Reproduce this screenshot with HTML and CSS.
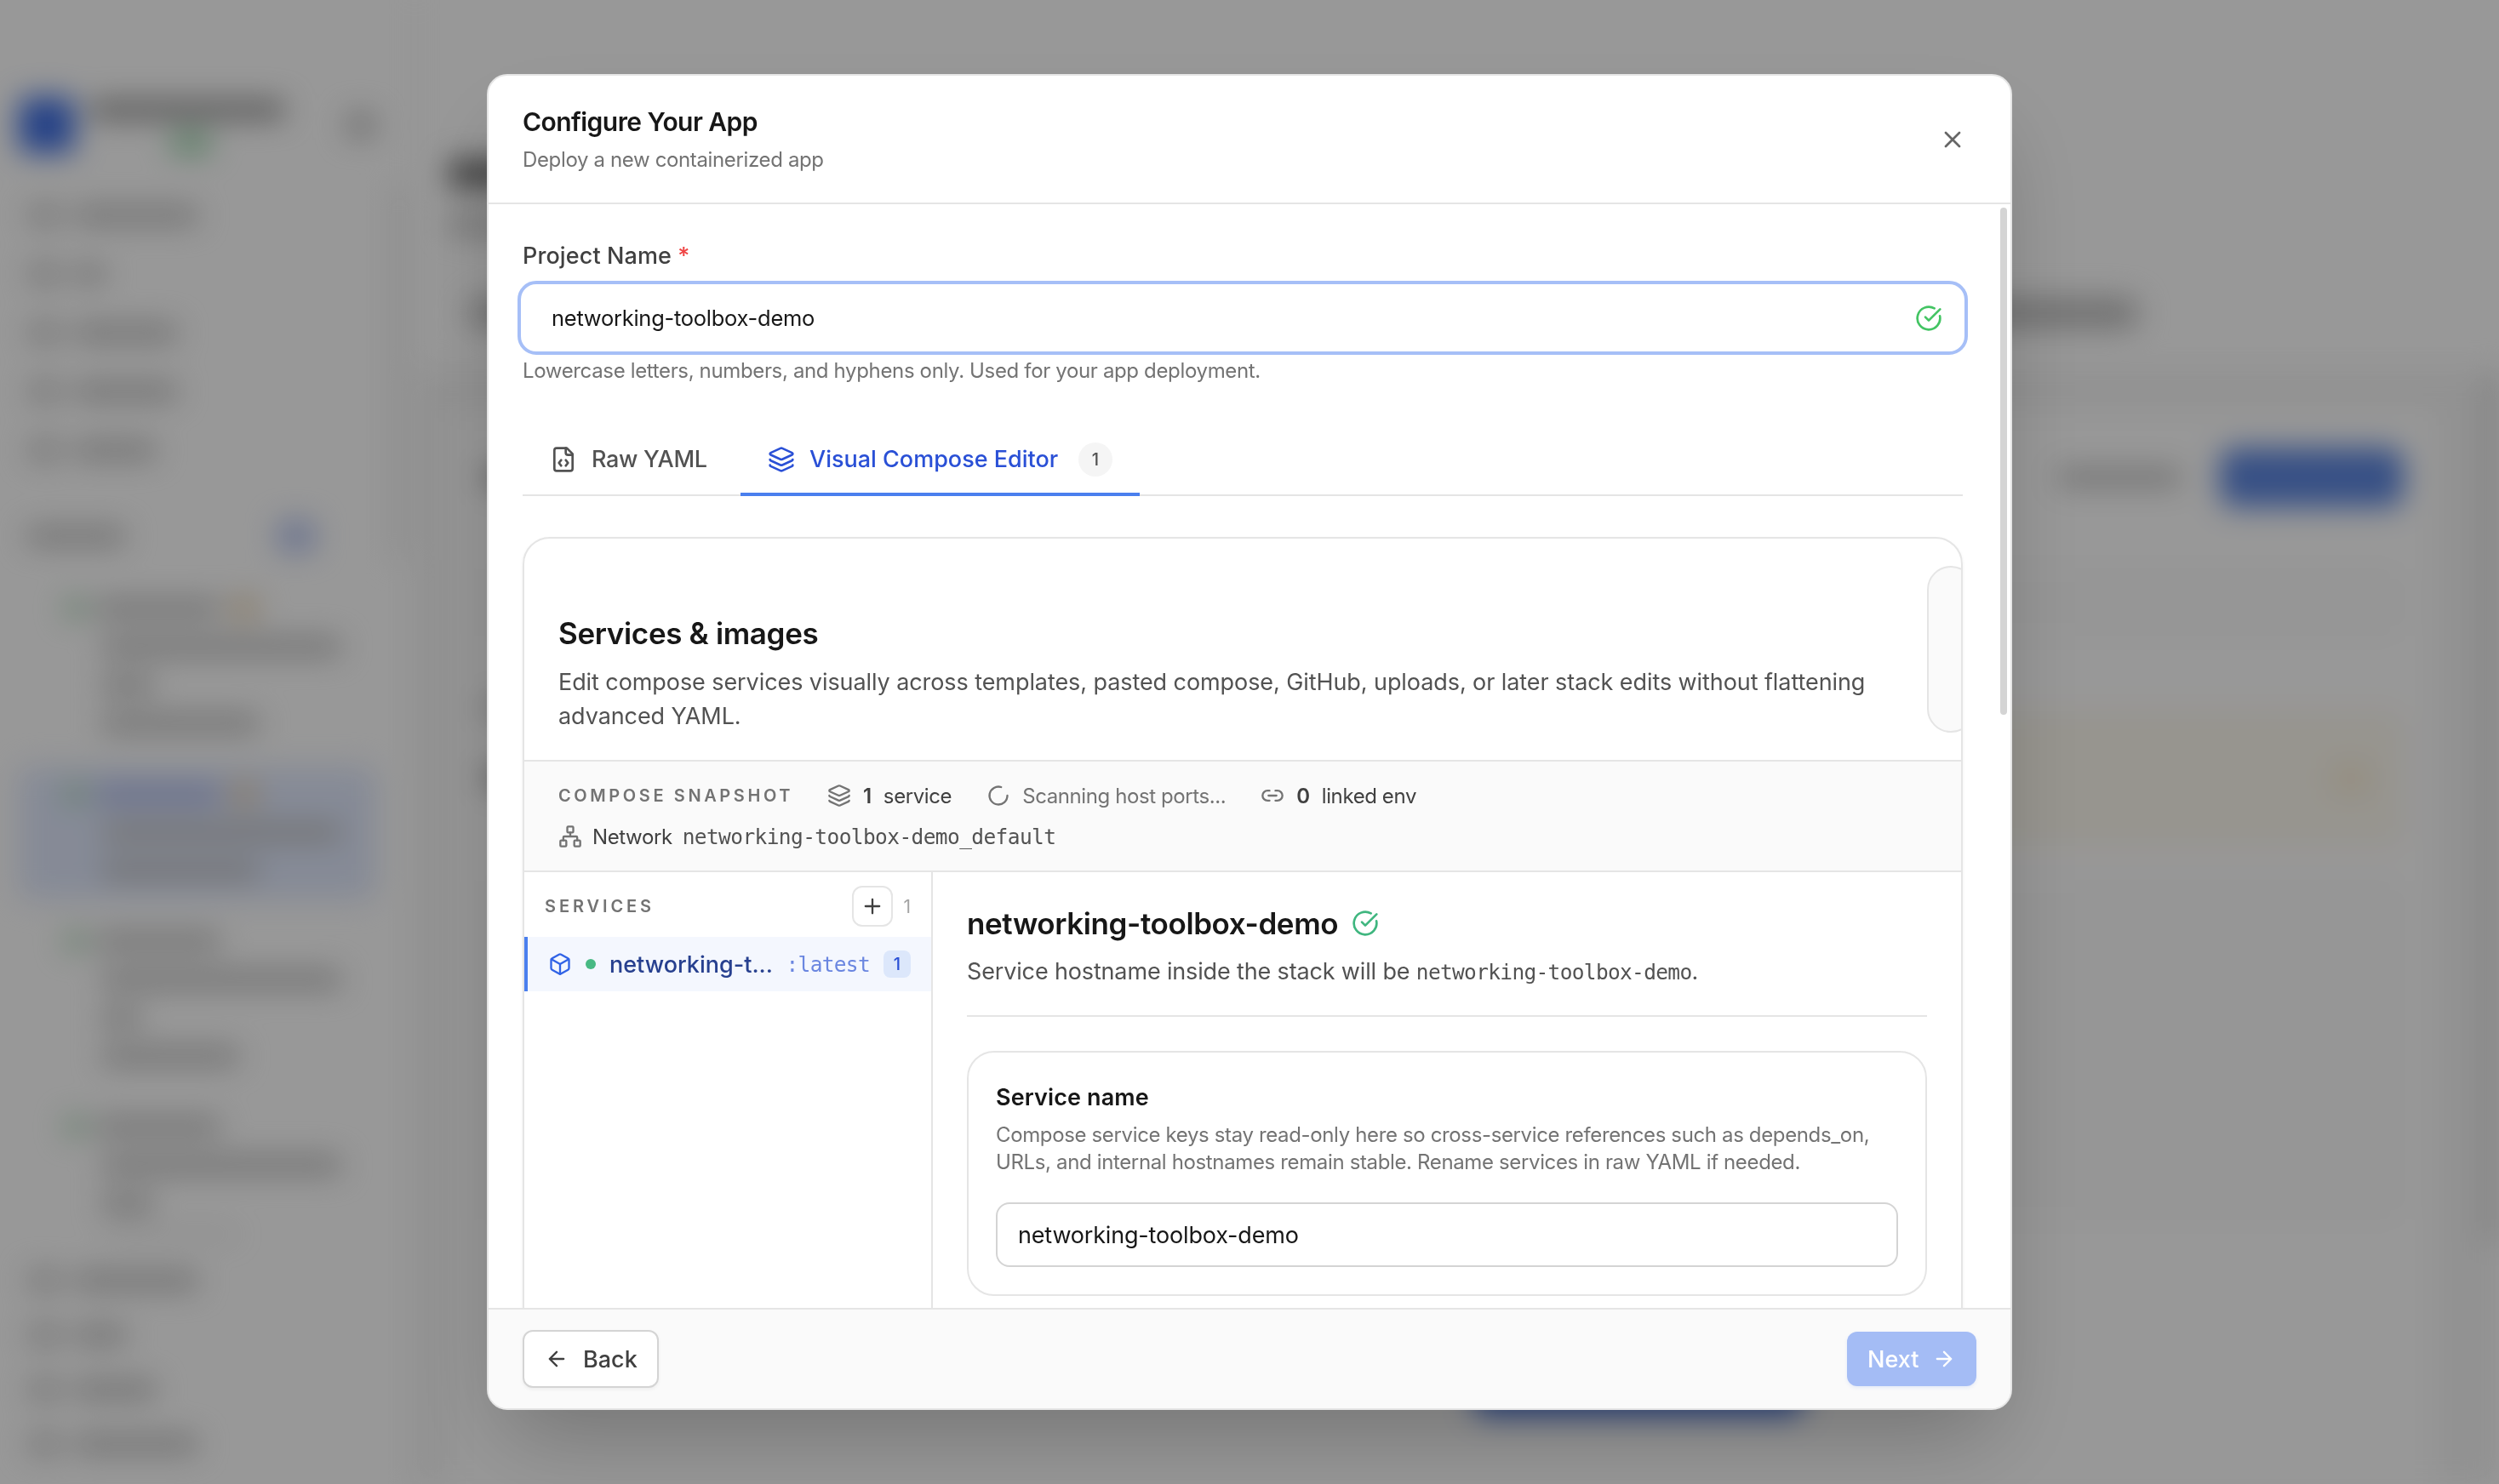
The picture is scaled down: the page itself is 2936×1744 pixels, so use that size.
FILE: index.html
```html
<!DOCTYPE html>
<html lang="en">
<head>
    <meta charset="UTF-8">
    <meta name="viewport" content="width=device-width, initial-scale=1.0">
    <title>Configure Your App</title>
    <link rel="stylesheet" href="styles.css">
</head>
<body>
    <!-- icon set -->
    <svg class="sprite">
        <symbol id="i-x" viewBox="0 0 24 24"><path d="M18 6 6 18M6 6l12 12"/></symbol>
        <symbol id="i-check" viewBox="0 0 24 24"><path d="M21.801 10A10 10 0 1 1 17 3.335"/><path d="m9 11 3 3L22 4"/></symbol>
        <symbol id="i-file" viewBox="0 0 24 24"><path d="M15 2H6a2 2 0 0 0-2 2v16a2 2 0 0 0 2 2h12a2 2 0 0 0 2-2V7Z"/><path d="M14 2v4a2 2 0 0 0 2 2h4"/><path d="M10 12.5 8 15l2 2.5M14 12.5l2 2.5-2 2.5"/></symbol>
        <symbol id="i-layers" viewBox="0 0 24 24"><path d="M12.83 2.18a2 2 0 0 0-1.66 0L2.6 6.08a1 1 0 0 0 0 1.83l8.58 3.91a2 2 0 0 0 1.66 0l8.58-3.9a1 1 0 0 0 0-1.83z"/><path d="M2 12a1 1 0 0 0 .58.91l8.6 3.91a2 2 0 0 0 1.65 0l8.58-3.9A1 1 0 0 0 22 12"/><path d="M2 17a1 1 0 0 0 .58.91l8.6 3.91a2 2 0 0 0 1.65 0l8.58-3.9A1 1 0 0 0 22 17"/></symbol>
        <symbol id="i-loader" viewBox="0 0 24 24"><path d="M21 12a9 9 0 1 1-6.219-8.56"/></symbol>
        <symbol id="i-link" viewBox="0 0 24 24"><path d="M9 17H7A5 5 0 0 1 7 7h2M15 7h2a5 5 0 1 1 0 10h-2M8 12h8"/></symbol>
        <symbol id="i-network" viewBox="0 0 24 24"><rect x="16" y="16" width="6" height="6" rx="1"/><rect x="2" y="16" width="6" height="6" rx="1"/><rect x="9" y="2" width="6" height="6" rx="1"/><path d="M5 16v-3a1 1 0 0 1 1-1h12a1 1 0 0 1 1 1v3M12 12V8"/></symbol>
        <symbol id="i-plus" viewBox="0 0 24 24"><path d="M5 12h14M12 5v14"/></symbol>
        <symbol id="i-box" viewBox="0 0 24 24"><path d="M21 8a2 2 0 0 0-1-1.73l-7-4a2 2 0 0 0-2 0l-7 4A2 2 0 0 0 3 8v8a2 2 0 0 0 1 1.73l7 4a2 2 0 0 0 2 0l7-4A2 2 0 0 0 21 16Z"/><path d="m3.3 7 8.7 5 8.7-5M12 22V12"/></symbol>
        <symbol id="i-left" viewBox="0 0 24 24"><path d="m12 19-7-7 7-7M19 12H5"/></symbol>
        <symbol id="i-right" viewBox="0 0 24 24"><path d="M5 12h14M12 5l7 7-7 7"/></symbol>
    </svg>

    <!-- page behind the dialog -->
    <div class="page">
        <aside class="sidebar">
            <div class="brand">
                <div class="brand-logo"></div>
                <div class="brand-text">
                    <div class="bar bar-dark w-230"></div>
                    <div class="bar bar-green"></div>
                </div>
                <div class="bar bar-toggle"></div>
            </div>
            <div class="nav">
                <div class="nav-item"><div class="bar nav-icon"></div><div class="bar w-140"></div></div>
                <div class="nav-item"><div class="bar nav-icon"></div><div class="bar w-35"></div></div>
                <div class="nav-item"><div class="bar nav-icon"></div><div class="bar w-120"></div></div>
                <div class="nav-item"><div class="bar nav-icon"></div><div class="bar w-120"></div></div>
                <div class="nav-item"><div class="bar nav-icon"></div><div class="bar w-95"></div></div>
            </div>
            <div class="nav-heading"><div class="bar w-115"></div><div class="bar bar-blue"></div></div>
            <div class="apps">
                <div class="app">
                    <div class="app-title"><span class="dot-green"></span><div class="bar w-140"></div><span class="dot-amber"></span></div>
                    <div class="bar w-280"></div>
                    <div class="bar w-60"></div>
                    <div class="bar w-180"></div>
                </div>
                <div class="app app-active">
                    <div class="app-title"><span class="dot-green"></span><div class="bar bar-active w-140"></div><span class="dot-amber"></span></div>
                    <div class="bar w-280"></div>
                    <div class="bar w-180"></div>
                </div>
                <div class="app">
                    <div class="app-title"><span class="dot-green"></span><div class="bar w-140"></div></div>
                    <div class="bar w-280"></div>
                    <div class="bar w-45"></div>
                    <div class="bar w-160"></div>
                </div>
                <div class="app">
                    <div class="app-title"><span class="dot-green"></span><div class="bar w-140"></div></div>
                    <div class="bar w-280"></div>
                    <div class="bar w-60"></div>
                    <div class="bar w-160"></div>
                </div>
            </div>
            <div class="nav nav-bottom">
                <div class="nav-item"><div class="bar nav-icon"></div><div class="bar w-140"></div></div>
                <div class="nav-item"><div class="bar nav-icon"></div><div class="bar w-60"></div></div>
                <div class="nav-item"><div class="bar nav-icon"></div><div class="bar w-95"></div></div>
                <div class="nav-item"><div class="bar nav-icon"></div><div class="bar w-140"></div></div>
            </div>
        </aside>
        <div class="side-scroll"></div>
        <main class="main">
            <div class="main-head">
                <div class="bar main-title"></div>
                <div class="bar main-sub"></div>
                <div class="main-tabs"></div>
            </div>
            <div class="main-body">
                <div class="main-card">
                    <div class="main-actions"><div class="bar bar-dark w-230"></div><div class="bar w-140"></div><div class="main-btn"></div></div>
                    <div class="panel panel-sm"></div>
                    <div class="main-row">
                        <div class="main-stack"><div class="bar w-230"></div><div class="bar bar-dark w-280"></div></div>
                        <div class="panel panel-warn"><div class="bar bar-warn"></div></div>
                    </div>
                    <div class="panel panel-lg"></div>
                    <div class="main-cta"></div>
                </div>
                <div class="main-scroll"></div>
            </div>
        </main>
    </div>

    <div class="overlay">
        <div class="modal">
            <header class="modal-header">
                <div>
                    <h2 class="modal-title">Configure Your App</h2>
                    <p class="modal-subtitle">Deploy a new containerized app</p>
                </div>
                <svg class="icon icon-close"><use href="#i-x"/></svg>
            </header>

            <div class="modal-body">
                <div class="field-label">Project Name <span class="required">*</span></div>
                <div class="project-input">
                    <span>networking-toolbox-demo</span>
                    <svg class="icon icon-lg valid"><use href="#i-check"/></svg>
                </div>
                <p class="field-hint">Lowercase letters, numbers, and hyphens only. Used for your app deployment.</p>

                <div class="tabs">
                    <div class="tab"><svg class="icon icon-lg"><use href="#i-file"/></svg><span>Raw YAML</span></div>
                    <div class="tab tab-active"><svg class="icon icon-lg"><use href="#i-layers"/></svg><span>Visual Compose Editor</span><span class="tab-count">1</span></div>
                </div>

                <div class="editor">
                    <div class="editor-head">
                        <div class="editor-intro">
                            <h3 class="editor-title">Services &amp; images</h3>
                            <p class="editor-desc">Edit compose services visually across templates, pasted compose, GitHub, uploads, or later stack edits without flattening advanced YAML.</p>
                        </div>
                        <div class="editor-side"></div>
                    </div>

                    <div class="snapshot">
                        <div class="snapshot-row">
                            <span class="caps snapshot-label">Compose snapshot</span>
                            <span class="stat"><svg class="icon icon-sm"><use href="#i-layers"/></svg><b>1</b><span>service</span></span>
                            <span class="stat stat-muted"><svg class="icon icon-sm"><use href="#i-loader"/></svg><span>Scanning host ports...</span></span>
                            <span class="stat"><svg class="icon icon-sm"><use href="#i-link"/></svg><b>0</b><span>linked env</span></span>
                        </div>
                        <div class="snapshot-row">
                            <span class="stat stat-network"><svg class="icon icon-sm"><use href="#i-network"/></svg><span>Network</span><code>networking-toolbox-demo_default</code></span>
                        </div>
                    </div>

                    <div class="editor-main">
                        <div class="services">
                            <div class="services-head">
                                <span class="caps">Services</span>
                                <button class="add-btn"><svg class="icon icon-sm"><use href="#i-plus"/></svg></button>
                                <span class="services-count">1</span>
                            </div>
                            <div class="service-row">
                                <svg class="icon icon-sm"><use href="#i-box"/></svg>
                                <span class="status-dot"></span>
                                <span class="service-name">networking-t...</span>
                                <code class="service-tag">:latest</code>
                                <span class="service-badge">1</span>
                            </div>
                        </div>
                        <div class="detail">
                            <div class="detail-head">
                                <h3 class="detail-title">networking-toolbox-demo <svg class="icon icon-lg"><use href="#i-check"/></svg></h3>
                                <p class="detail-desc">Service hostname inside the stack will be <code>networking-toolbox-demo</code>.</p>
                            </div>
                            <div class="service-card">
                                <h4 class="card-title">Service name</h4>
                                <p class="card-desc">Compose service keys stay read-only here so cross-service references such as depends_on,<br>URLs, and internal hostnames remain stable. Rename services in raw YAML if needed.</p>
                                <div class="card-input">networking-toolbox-demo</div>
                            </div>
                        </div>
                    </div>
                </div>
                <div class="scroll-thumb"></div>
            </div>

            <footer class="modal-footer">
                <button class="btn btn-back"><svg class="icon icon-sm"><use href="#i-left"/></svg><span>Back</span></button>
                <button class="btn btn-next"><span>Next</span><svg class="icon icon-sm"><use href="#i-right"/></svg></button>
            </footer>
        </div>
    </div>
</body>
</html>
```

FILE: styles.css
```css
:root {
    --primary: #4a7fee;
    --border: #e5e5e5;
    --border-strong: #d4d4d4;
    --text: #171717;
    --text-mid: #404040;
    --text-soft: #525252;
    --text-muted: #737373;
    --surface: #fafafa;
}

* {
    margin: 0;
    padding: 0;
    box-sizing: border-box;
}

body {
    width: 2936px;
    height: 1744px;
    overflow: hidden;
    background: #fdfdfd;
    color: var(--text);
    font-family: Inter, "Liberation Sans", sans-serif;
    font-size: 27px;
}

code {
    font-family: "DejaVu Sans Mono", "Liberation Mono", monospace;
    font-size: 24.5px;
    letter-spacing: -0.68px;
}

button {
    font-family: inherit;
}

.sprite {
    display: none;
}

.icon {
    flex: none;
    fill: none;
    stroke: currentColor;
    stroke-width: 2;
    stroke-linecap: round;
    stroke-linejoin: round;
}

.icon-lg {
    width: 32px;
    height: 32px;
}

.icon-sm {
    width: 28px;
    height: 28px;
}

/* page behind the dialog */
.page {
    display: flex;
    height: 1744px;
    filter: blur(17px);
}

.bar {
    height: 20px;
    background: #bcbcbc;
    border-radius: 6px;
}

.w-35 { width: 35px; }
.w-45 { width: 45px; }
.w-60 { width: 60px; }
.w-95 { width: 95px; }
.w-115 { width: 115px; }
.w-120 { width: 120px; }
.w-140 { width: 144px; }
.w-160 { width: 160px; }
.w-180 { width: 184px; }
.w-230 { width: 228px; }
.w-280 { width: 280px; }

.sidebar {
    width: 460px;
    padding-top: 113px;
}

.brand {
    display: flex;
    align-items: center;
    height: 68px;
    padding-left: 22px;
}

.brand-logo {
    width: 66px;
    height: 66px;
    margin-right: 18px;
    border-radius: 12px;
    background: #3f6ee0;
}

.brand-text {
    width: 302px;
    height: 64px;
}

.bar-dark {
    background: #8c8c8c;
}

.brand-text .bar-dark {
    margin-top: 4px;
}

.bar-green {
    width: 48px;
    height: 24px;
    margin: 17px 0 0 94px;
    background: #97d3a8;
}

.bar-toggle {
    width: 32px;
    height: 28px;
}

.nav {
    padding: 37px 0 0 34px;
}

.nav-item {
    display: flex;
    align-items: center;
    gap: 16px;
    height: 69px;
}

.nav-icon {
    width: 38px;
    height: 24px;
    background: #c8c8c8;
}

.nav-heading {
    display: flex;
    align-items: center;
    justify-content: space-between;
    height: 50px;
    margin: 42px 90px 0 32px;
}

.bar-blue {
    width: 44px;
    height: 36px;
    background: #b6c4f0;
}

.apps {
    height: 797px;
    overflow: hidden;
    padding: 28px 18px 0 22px;
}

.app {
    display: flex;
    flex-direction: column;
    gap: 25px;
    margin-bottom: 17px;
    padding: 22px 0 24px 98px;
    border-radius: 16px;
}

.app-active {
    background: #dfe7fb;
}

.app-title {
    display: flex;
    align-items: center;
    gap: 12px;
    height: 20px;
    margin-left: -44px;
}

.dot-green,
.dot-amber {
    width: 26px;
    height: 22px;
    border-radius: 10px;
    background: #a8d4b1;
}

.dot-amber {
    width: 34px;
    height: 26px;
    background: #e6d0ae;
}

.bar-active {
    background: #a9b4e6;
}

.nav-bottom {
    padding-top: 21px;
}

.nav-bottom .nav-item {
    height: 64px;
}

.side-scroll {
    width: 16px;
    height: 440px;
    margin: 218px 10px 0 0;
    background: #ececec;
}

.main {
    flex: 1;
    border-left: 2px solid #e5e5e5;
}

.main-head {
    height: 440px;
    padding: 188px 0 0 40px;
    border-bottom: 2px solid #e5e5e5;
}

.main-title {
    width: 400px;
    height: 32px;
    background: #666;
}

.main-sub {
    width: 500px;
    margin-top: 34px;
}

.main-tabs {
    width: 1960px;
    height: 36px;
    margin: 76px 0 0 24px;
    border-radius: 16px;
    background: #bcbcbc;
}

.main-body {
    display: flex;
    justify-content: space-between;
    height: 1304px;
    padding: 40px 0 0 42px;
    background: #f3f3f3;
}

.main-card {
    flex: 1;
    padding: 46px 40px 0 40px;
    background: #fdfdfd;
}

.main-actions {
    display: flex;
    align-items: center;
    gap: 46px;
}

.main-actions .bar-dark {
    margin-right: auto;
}

.main-btn {
    width: 216px;
    height: 70px;
    border-radius: 18px;
    background: #5d86de;
}

.panel {
    border-radius: 20px;
    background: #fafafa;
}

.panel-sm {
    height: 80px;
    margin-top: 72px;
}

.main-row {
    display: flex;
    margin-top: 88px;
}

.main-stack {
    display: flex;
    flex-direction: column;
    gap: 62px;
    width: 400px;
    margin-top: -14px;
}

.panel-warn {
    display: flex;
    flex: 1;
    align-items: center;
    justify-content: flex-end;
    height: 158px;
    padding-right: 42px;
    background: #fcf8ee;
}

.bar-warn {
    width: 40px;
    height: 30px;
    background: #f7ead0;
}

.panel-lg {
    height: 400px;
    margin-top: 40px;
}

.main-cta {
    width: 388px;
    height: 70px;
    margin: 159px 0 0 1161px;
    border-radius: 16px;
    background: #4470d8;
}

.main-scroll {
    width: 18px;
    height: 1020px;
    margin: -40px 0 0 54px;
    background: #d8d8d8;
}

/* dialog */
.overlay {
    position: fixed;
    inset: 0;
    display: flex;
    align-items: center;
    justify-content: center;
    background: rgba(0, 0, 0, 0.4);
}

.modal {
    display: flex;
    flex-direction: column;
    width: 1792px;
    height: 1570px;
    overflow: hidden;
    border: 2px solid var(--border);
    border-radius: 24px;
    background: #fff;
    box-shadow: 0 50px 100px -24px rgba(0, 0, 0, 0.25);
}

.modal-header {
    display: flex;
    align-items: center;
    justify-content: space-between;
    height: 151px;
    padding: 1px 52px 0 40px;
    border-bottom: 2px solid var(--border);
}

.modal-title {
    font-size: 30px;
    font-weight: 600;
    letter-spacing: -0.56px;
    line-height: 42px;
}

.modal-subtitle {
    margin-top: 6px;
    color: var(--text-muted);
    font-size: 24px;
    letter-spacing: -0.36px;
    line-height: 36px;
}

.icon-close {
    width: 32px;
    height: 32px;
    color: #666;
}

.modal-body {
    position: relative;
    flex: 1;
    min-height: 0;
    overflow: hidden;
    padding: 41px 56px 0 40px;
}

.field-label {
    color: var(--text-mid);
    font-size: 27px;
    font-weight: 500;
    letter-spacing: 0.1px;
    line-height: 40px;
}

.required {
    color: #ef4444;
}

.project-input {
    display: flex;
    align-items: center;
    justify-content: space-between;
    height: 75px;
    margin-top: 15px;
    padding: 0 24px 0 34px;
    border-radius: 16px;
    outline: 4px solid #a6bff7;
    outline-offset: 2px;
    font-size: 25.5px;
    letter-spacing: -0.27px;
}

.valid {
    color: #43c463;
}

.field-hint {
    margin-top: 8px;
    color: var(--text-muted);
    font-size: 24px;
    letter-spacing: -0.35px;
    line-height: 34px;
}

.tabs {
    display: flex;
    height: 87px;
    margin-top: 43px;
    border-bottom: 2px solid var(--border);
}

.tab {
    display: flex;
    align-items: center;
    gap: 17px;
    width: 256px;
    height: 87px;
    padding: 0 32px;
    color: var(--text-soft);
    font-weight: 500;
    letter-spacing: -0.3px;
    white-space: nowrap;
}

.tab-active {
    width: 469px;
    border-bottom: 4px solid var(--primary);
    padding-top: 4px;
    color: #2a50d6;
    letter-spacing: 0;
}

.tab-count {
    width: 40px;
    height: 40px;
    margin-left: auto;
    border-radius: 50%;
    background: #f5f5f5;
    color: var(--text-soft);
    font-size: 20px;
    line-height: 40px;
    text-align: center;
}

.editor {
    height: 1000px;
    margin-top: 48px;
    overflow: hidden;
    border: 2px solid var(--border);
    border-radius: 32px;
    box-shadow: 0 2px 4px rgba(0, 0, 0, 0.06);
}

.editor-head {
    display: flex;
    height: 262px;
    padding: 32px 0 0 40px;
    border-bottom: 2px solid var(--border);
}

.editor-intro {
    flex: none;
    width: 1608px;
    padding-top: 55px;
}

.editor-title {
    font-size: 35px;
    font-weight: 600;
    letter-spacing: -0.35px;
    line-height: 48px;
}

.editor-desc {
    width: 1560px;
    margin-top: 14px;
    color: var(--text-soft);
    font-size: 27px;
    letter-spacing: -0.08px;
    line-height: 40px;
}

.editor-side {
    flex: none;
    width: 56px;
    height: 196px;
    border: 2px solid var(--border);
    border-radius: 28px;
    background: var(--surface);
}

.snapshot {
    height: 130px;
    padding: 16px 40px;
    border-bottom: 2px solid var(--border);
    background: var(--surface);
}

.snapshot-row {
    display: flex;
    align-items: center;
    height: 48px;
    gap: 41px;
}

.caps {
    color: var(--text-muted);
    font-size: 20px;
    font-weight: 600;
    letter-spacing: 3.9px;
    text-transform: uppercase;
}

.snapshot-label {
    margin-right: -1px;
    letter-spacing: 3.6px;
}

.stat {
    display: flex;
    align-items: center;
    gap: 14px;
    color: var(--text-mid);
    font-size: 24px;
    letter-spacing: -0.4px;
}

.stat b {
    font-weight: 600;
}

.stat .icon {
    color: var(--text-muted);
}

.stat code {
    color: var(--text-soft);
    letter-spacing: -0.6px;
}

.stat-muted {
    color: var(--text-muted);
}

.stat-network {
    gap: 12px;
}

.editor-main {
    display: flex;
    height: 800px;
}

.services {
    width: 480px;
    border-right: 2px solid var(--border);
}

.services-head {
    display: flex;
    align-items: center;
    height: 76px;
    padding: 4px 24px 0;
}

.add-btn {
    display: flex;
    align-items: center;
    justify-content: center;
    width: 48px;
    height: 48px;
    margin-left: auto;
    border: 2px solid var(--border);
    border-radius: 12px;
    background: #fff;
    color: var(--text-mid);
}

.services-count {
    margin-left: 12px;
    color: #a3a3a3;
    font-size: 21px;
}

.service-row {
    display: flex;
    align-items: center;
    height: 64px;
    padding: 0 24px;
    border-left: 4px solid var(--primary);
    background: #f4f7fe;
    color: #3163e6;
}

.status-dot {
    width: 12px;
    height: 12px;
    margin: 0 16px;
    border-radius: 50%;
    background: #48b983;
}

.service-name {
    color: #27408f;
    font-weight: 500;
}

.service-tag {
    margin-left: auto;
    color: #6a86e0;
}

.service-badge {
    width: 32px;
    height: 32px;
    margin-left: 16px;
    border-radius: 8px;
    background: #dce7fb;
    color: #2a50d6;
    font-size: 20px;
    font-weight: 500;
    line-height: 32px;
    text-align: center;
}

.detail {
    flex: 1;
    padding: 36px 40px 0;
}

.detail-head {
    height: 134px;
    border-bottom: 2px solid var(--border);
}

.detail-title {
    display: flex;
    align-items: center;
    gap: 16px;
    font-size: 35px;
    font-weight: 600;
    letter-spacing: -0.4px;
    line-height: 48px;
}

.detail-title .icon {
    color: #3fb67f;
}

.detail-desc {
    margin-top: 13px;
    color: var(--text-soft);
    letter-spacing: -0.15px;
    line-height: 40px;
}

.service-card {
    height: 288px;
    margin-top: 40px;
    padding: 33px 32px 32px;
    border: 2px solid var(--border);
    border-radius: 32px;
}

.card-title {
    font-size: 27px;
    font-weight: 600;
    letter-spacing: 0.12px;
    line-height: 40px;
}

.card-desc {
    margin-top: 8px;
    color: var(--text-muted);
    font-size: 24px;
    letter-spacing: -0.36px;
    line-height: 32px;
    white-space: nowrap;
}

.card-input {
    height: 76px;
    margin-top: 31px;
    padding-left: 24px;
    border: 2px solid var(--border-strong);
    border-radius: 16px;
    font-size: 27px;
    letter-spacing: -0.18px;
    line-height: 73px;
}

.scroll-thumb {
    position: absolute;
    top: 4px;
    right: 4px;
    width: 8px;
    height: 596px;
    border-radius: 4px;
    background: #d4d4d4;
}

.modal-footer {
    display: flex;
    align-items: center;
    justify-content: space-between;
    height: 118px;
    padding: 0 40px;
    border-top: 2px solid var(--border);
    background: var(--surface);
}

.btn {
    display: flex;
    align-items: center;
    border-radius: 12px;
    font-size: 27px;
    font-weight: 500;
}

.btn-back {
    gap: 17px;
    width: 160px;
    height: 68px;
    padding-left: 24px;
    border: 2px solid var(--border-strong);
    background: #fff;
    color: var(--text-mid);
    box-shadow: 0 2px 4px rgba(0, 0, 0, 0.05);
}

.btn-next {
    gap: 16px;
    width: 152px;
    height: 64px;
    padding-left: 24px;
    border: none;
    background: #a4bcf5;
    color: #fff;
    box-shadow: 0 2px 4px rgba(74, 127, 238, 0.12);
}
```
